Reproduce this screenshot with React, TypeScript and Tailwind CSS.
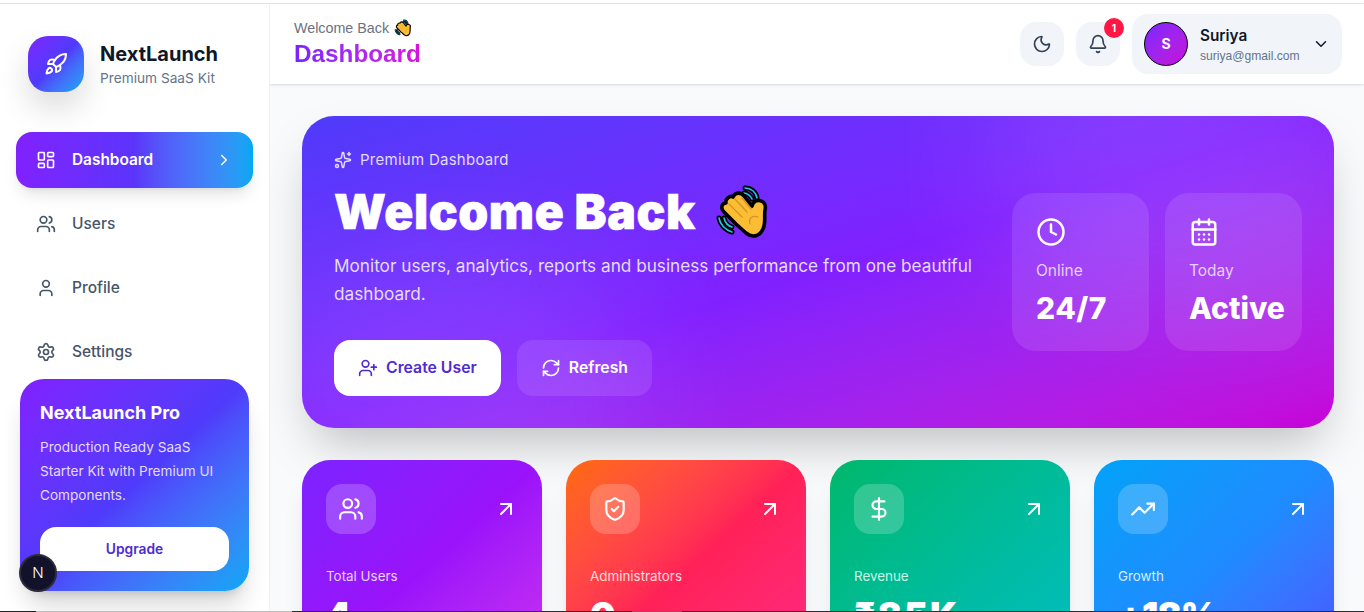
import {
  ArrowUpRight,
  Bell,
  CalendarDays,
  ChevronDown,
  ChevronRight,
  Clock,
  DollarSign,
  LayoutDashboard,
  Moon,
  RefreshCw,
  Rocket,
  Settings,
  ShieldCheck,
  Sparkles,
  TrendingUp,
  User,
  UserPlus,
  Users,
} from 'lucide-react';

const navItems = [
  { label: 'Users', icon: Users },
  { label: 'Profile', icon: User },
  { label: 'Settings', icon: Settings },
];

const stats = [
  { label: 'Total Users', value: '4', icon: Users, bg: 'bg-gradient-to-br from-[#7c22ff] via-[#9a12fa] to-[#d02cf0]', text: 'text-[#ecd0ff]', track: 'tracking-[1px]' },
  { label: 'Administrators', value: '0', icon: ShieldCheck, bg: 'bg-gradient-to-br from-[#ff6a00] via-[#ff2157] to-[#ff2a85]', text: 'text-[#ffdcdc]', track: 'tracking-[1px]' },
  { label: 'Revenue', value: '₹85K', icon: DollarSign, bg: 'bg-gradient-to-br from-[#00b86b] to-[#00bdc4]', text: 'text-[#c9f5e6]', track: 'tracking-[2px]' },
  { label: 'Growth', value: '+18%', icon: TrendingUp, bg: 'bg-gradient-to-br from-[#00a2f8] via-[#1e8bff] to-[#4a4dff]', text: 'text-[#d6ecff]', track: 'tracking-[-1px]' },
];

// waving hand, the outlined style the screenshot's emoji font draws
function WaveHand({ className }: { className: string }) {
  return (
    <svg viewBox="6 5 55 56" className={className} role="img" aria-label="waving hand">
      <g fill="none" strokeLinecap="round">
        <path d="M36 9C42 9 47 13 48 19M35 14C38 14 42 17 43 20M10 39C11 45 16 51 23 53M15 39C16 43 19 47 23 48" stroke="#000" strokeWidth="5" />
        <path d="M36 9C42 9 47 13 48 19M35 14C38 14 42 17 43 20M10 39C11 45 16 51 23 53M15 39C16 43 19 47 23 48" stroke="#1fc8e0" strokeWidth="1.6" />
      </g>
      <path
        d="M15 33C11 29 13 24 17 24C16 20 21 16 24 18C26 13 32 13 35 17L43 27C44 23 48 20 52 22C56 23 57 27 56 31C55 37 57 44 54 50C50 58 43 59 37 54L27 45Z"
        fill="#fbbd33"
        stroke="#000"
        strokeWidth="3.6"
        strokeLinejoin="round"
      />
      <path d="M20 25L33 38M26 20L38 33M33 19L42 30M41 45C39 39 44 36 49 38" fill="none" stroke="#d9902a" strokeWidth="1.2" strokeLinecap="round" />
    </svg>
  );
}

function Sidebar() {
  return (
    <aside className="relative flex h-full w-[270px] shrink-0 flex-col border-r border-[#eceff3] bg-white px-4 pt-8">
      <div className="flex items-center gap-4 pl-3">
        <div className="flex h-14 w-14 items-center justify-center rounded-[20px] bg-gradient-to-br from-[#7c22ff] via-[#4f3bfb] to-[#00a8f4] shadow-[0_16px_32px_rgba(0,0,0,0.14)]">
          <Rocket size={24} color="white" />
        </div>
        <div>
          <h1 className="text-xl font-bold leading-7 text-[#0f172a]">NextLaunch</h1>
          <p className="text-[13.7px] leading-5 text-[#64748b]">Premium SaaS Kit</p>
        </div>
      </div>

      <nav className="mt-10 flex flex-col gap-2">
        <a className="flex h-14 items-center justify-between rounded-2xl bg-gradient-to-r from-[#8120ff] via-[#5b34fb] to-[#00a8f4] px-5 text-white shadow-lg shadow-black/10">
          <span className="flex items-center gap-4 text-[15.4px] font-semibold">
            <LayoutDashboard size={20} />
            Dashboard
          </span>
          <ChevronRight size={18} />
        </a>
        {navItems.map((item) => (
          <a key={item.label} className="flex h-14 items-center gap-4 px-5 text-[15.5px] font-medium text-[#475569]">
            <item.icon size={20} />
            {item.label}
          </a>
        ))}
      </nav>

      <div className="absolute bottom-[21px] left-5 w-[229px] rounded-3xl bg-gradient-to-br from-[#8120ff] via-[#4f3bfb] to-[#00a8f4] p-5 text-white shadow-xl shadow-black/15">
        <h3 className="text-lg font-bold leading-7">NextLaunch Pro</h3>
        <p className="mt-2 text-[13.6px] leading-6 text-[#e5dcff]">
          Production Ready SaaS Starter Kit with Premium UI Components.
        </p>
        <button className="mt-5 h-11 w-full rounded-2xl bg-white text-[13.8px] font-semibold text-[#4f2bd0]">Upgrade</button>
      </div>

      <div className="absolute bottom-5 left-[19px] flex h-[38px] w-[38px] items-center justify-center rounded-full border-2 border-[#2c2c3a] bg-[#12122a] text-[15px] font-light text-white">
        N
      </div>
    </aside>
  );
}

function Header() {
  return (
    <header className="flex h-20 shrink-0 items-center justify-between bg-white pl-6 pr-[22px] shadow-sm">
      <div className="pb-[3px] [font-family:'Liberation_Sans',Arial,sans-serif]">
        <p className="flex items-center gap-[5px] text-[14.3px] leading-5 text-[#6b7280]">
          Welcome Back
          <WaveHand className="h-[18px] w-[18px]" />
        </p>
        <h2 className="mt-[2px] bg-gradient-to-r from-[#7c22ff] to-[#d90fe0] bg-clip-text text-[24.3px] font-bold leading-7 text-transparent">
          Dashboard
        </h2>
      </div>
      <div className="flex items-center gap-3">
        <button className="flex h-11 w-11 items-center justify-center rounded-2xl bg-[#f1f5f9] text-[#334155]">
          <Moon size={20} />
        </button>
        <button className="relative flex h-11 w-11 items-center justify-center rounded-2xl bg-[#f1f5f9] text-[#334155]">
          <Bell size={20} />
          <span className="absolute -right-1 -top-1 flex h-5 w-5 items-center justify-center rounded-full bg-[#ff1744] text-[10px] font-bold text-white">1</span>
        </button>
        <div className="flex h-[60px] w-[210px] items-center gap-3 rounded-2xl bg-[#f1f5f9] px-3">
          <div className="flex h-11 w-11 items-center justify-center rounded-full border border-black bg-gradient-to-br from-[#7c22ff] to-[#c800d8] text-sm font-bold text-white">S</div>
          <div className="flex-1 pt-px">
            <p className="text-[15.3px] font-semibold leading-5 text-[#0f172a]">Suriya</p>
            <p className="mt-[2px] text-[12.1px] leading-4 text-[#64748b] [font-family:'Liberation_Sans',Arial,sans-serif]">suriya@gmail.com</p>
          </div>
          <ChevronDown size={18} className="text-[#0f172a]" />
        </div>
      </div>
    </header>
  );
}

function Hero() {
  return (
    <section className="relative flex items-center justify-between overflow-hidden rounded-[32px] bg-gradient-to-br from-[#4f3bfb] via-[#8120ff] to-[#c800d8] px-8 py-8">
      <div className="absolute -right-10 -top-20 h-64 w-96 rounded-full bg-white/10 blur-3xl" />
      <div className="absolute -bottom-24 -left-10 h-64 w-96 rounded-full bg-white/10 blur-3xl" />
      <div className="relative w-[650px]">
        <div className="flex items-center gap-2 text-[15px] leading-6 tracking-[0.27px] text-[#e5dcff]">
          <Sparkles size={18} />
          Premium Dashboard
        </div>
        <h2 className="mt-[10px] flex items-center gap-[19px] text-5xl font-black leading-[60px] tracking-[0.6px] text-white [-webkit-text-stroke:0.6px_white]">
          Welcome Back
          <WaveHand className="h-[56px] w-[55px]" />
        </h2>
        <p className="mt-[10px] text-[17.2px] leading-7 text-[#e5dcff]">
          Monitor users, analytics, reports and business performance from one beautiful dashboard.
        </p>
        <div className="mt-8 flex gap-4">
          <button className="flex h-14 items-center gap-2 rounded-2xl bg-white px-6 text-[15.8px] font-semibold text-[#4f2bd0]">
            <UserPlus size={20} />
            Create User
          </button>
          <button className="flex h-14 items-center gap-2 rounded-2xl bg-white/10 px-6 text-[15.8px] font-semibold text-white">
            <RefreshCw size={20} />
            Refresh
          </button>
        </div>
      </div>
      <div className="relative flex gap-4">
        <div className="h-[158px] w-[137px] rounded-3xl bg-white/10 p-6 text-white">
          <Clock size={30} />
          <p className="mt-[14px] text-[15.5px] leading-5 text-[#e5d0ff]">Online</p>
          <p className="mt-[9px] text-3xl font-extrabold tracking-[0.5px]">24/7</p>
        </div>
        <div className="h-[158px] w-[137px] rounded-3xl bg-white/10 p-6 text-white">
          <CalendarDays size={30} />
          <p className="mt-[14px] text-[15.5px] leading-5 text-[#e5d0ff]">Today</p>
          <p className="mt-[9px] text-3xl font-extrabold">Active</p>
        </div>
      </div>
    </section>
  );
}

export default function App() {
  return (
    <div className="relative h-screen overflow-hidden bg-white pt-1 [font-family:Inter,sans-serif]">
      <div className="absolute inset-x-0 top-[3px] h-px bg-[#e2e4e8]" />
      <div className="flex h-full">
        <Sidebar />
        <div className="flex min-w-0 flex-1 flex-col bg-[#f8fafc]">
          <Header />
          <main className="flex flex-1 flex-col gap-8 overflow-hidden pl-8 pr-[30px] pt-8">
            <div className="rounded-[32px] shadow-2xl shadow-black/25">
              <Hero />
            </div>
            <div className="grid grid-cols-4 gap-6">
              {stats.map((s) => (
                <div key={s.label} className={`h-[220px] rounded-[28px] p-6 text-white shadow-xl shadow-black/10 ${s.bg}`}>
                  <div className="flex items-center justify-between">
                    <div className="flex h-[50px] w-[50px] items-center justify-center rounded-2xl bg-white/20">
                      <s.icon size={26} />
                    </div>
                    <ArrowUpRight size={24} />
                  </div>
                  <p className={`mt-8 text-[13.4px] ${s.text}`}>{s.label}</p>
                  <p className={`mt-[9px] text-4xl font-black ${s.track}`}>{s.value}</p>
                </div>
              ))}
            </div>
          </main>
        </div>
      </div>
      {/* dark strip along the lower edge of the capture */}
      <div className="absolute inset-x-0 bottom-0 flex h-px">
        <div className="w-9 bg-[#222]" />
        <div className="w-64 bg-[#bdbdbd]" />
        <div className="w-[340px] bg-[#2b2b33]" />
        <div className="w-[50px] bg-[#666]" />
        <div className="flex-1 bg-[#2b2b33]" />
      </div>
    </div>
  );
}
